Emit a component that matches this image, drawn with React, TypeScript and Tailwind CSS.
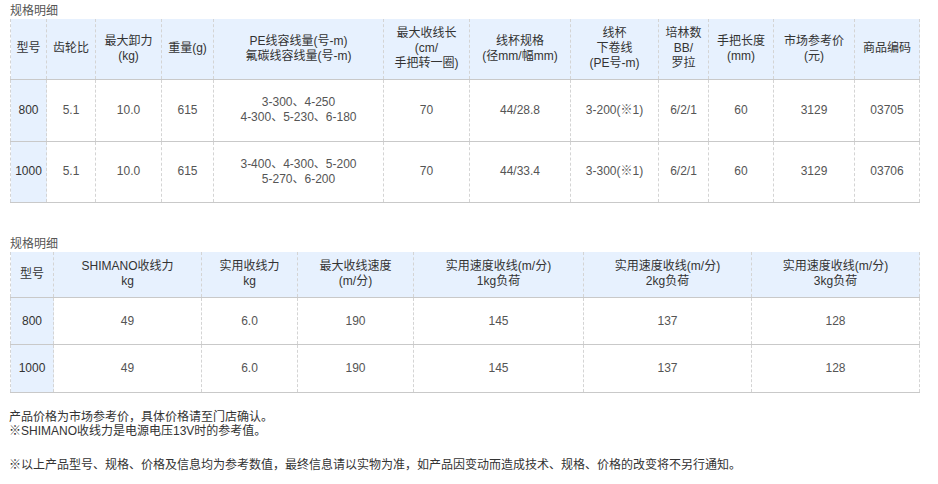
import React from "react";

const font = { fontFamily: '"Liberation Sans", "Noto Sans CJK SC", sans-serif' };

type Cell = string | string[];

function Lines({ v }: { v: Cell }) {
  if (Array.isArray(v)) {
    return (
      <>
        {v.map((l, i) => (
          <div key={i}>{l}</div>
        ))}
      </>
    );
  }
  return <>{v}</>;
}

function SpecTable({
  widths,
  head,
  rows,
  headH,
  rowH,
}: {
  widths: number[];
  head: Cell[];
  rows: Cell[][];
  headH: string;
  rowH: string[];
}) {
  return (
    <table className="table-fixed border-collapse w-[909px] ml-[10px] text-[12px] leading-[15px]">
      <colgroup>
        {widths.map((w, i) => (
          <col key={i} style={{ width: w }} />
        ))}
      </colgroup>
      <thead>
        <tr className={headH}>
          {head.map((h, i) => (
            <th
              key={i}
              className="p-0 font-normal text-center align-middle text-[#333] bg-[#e7f1fe] border-x border-dashed border-x-[#d4d4d4] border-b border-b-[#c9c9c9] [border-bottom-style:solid]"
            >
              <Lines v={h} />
            </th>
          ))}
        </tr>
      </thead>
      <tbody>
        {rows.map((r, ri) => (
          <tr key={ri} className={rowH[ri]}>
            {r.map((c, ci) => (
              <td
                key={ci}
                className={
                  "p-0 text-center align-middle border-x border-dashed border-x-[#d4d4d4] border-b border-b-[#c9c9c9] [border-bottom-style:solid] " +
                  (ci === 0 ? "bg-[#e7f1fe] text-[#333]" : "bg-white text-[#555]")
                }
              >
                <Lines v={c} />
              </td>
            ))}
          </tr>
        ))}
      </tbody>
    </table>
  );
}

export default function App() {
  return (
    <div className="w-[938px] h-[484px] bg-white overflow-hidden" style={font}>
      <div className="pt-[4px] pl-[10px] text-[12px] leading-[15px] text-[#555]">规格明细</div>
      <SpecTable
        widths={[36, 49, 66, 52, 170, 86, 101, 88, 50, 65, 81, 65]}
        headH="h-[60px]"
        rowH={["h-[62px]", "h-[61px]"]}
        head={[
          "型号",
          "齿轮比",
          ["最大卸力", "(kg)"],
          "重量(g)",
          ["PE线容线量(号-m)", "氟碳线容线量(号-m)"],
          ["最大收线长", "(cm/", "手把转一圈)"],
          ["线杯规格", "(径mm/幅mm)"],
          ["线杯", "下卷线", "(PE号-m)"],
          ["培林数", "BB/", "罗拉"],
          ["手把长度", "(mm)"],
          ["市场参考价", "(元)"],
          "商品编码",
        ]}
        rows={[
          ["800", "5.1", "10.0", "615", ["3-300、4-250", "4-300、5-230、6-180"], "70", "44/28.8", "3-200(※1)", "6/2/1", "60", "3129", "03705"],
          ["1000", "5.1", "10.0", "615", ["3-400、4-300、5-200", "5-270、6-200"], "70", "44/33.4", "3-300(※1)", "6/2/1", "60", "3129", "03706"],
        ]}
      />
      <div className="mt-[34px] pl-[10px] text-[12px] leading-[15px] text-[#555]">规格明细</div>
      <SpecTable
        widths={[43, 148, 96, 116, 170, 168, 168]}
        headH="h-[46px]"
        rowH={["h-[47px]", "h-[48px]"]}
        head={[
          "型号",
          ["SHIMANO收线力", "kg"],
          ["实用收线力", "kg"],
          ["最大收线速度", "(m/分)"],
          ["实用速度收线(m/分)", "1kg负荷"],
          ["实用速度收线(m/分)", "2kg负荷"],
          ["实用速度收线(m/分)", "3kg负荷"],
        ]}
        rows={[
          ["800", "49", "6.0", "190", "145", "137", "128"],
          ["1000", "49", "6.0", "190", "145", "137", "128"],
        ]}
      />
      <div className="mt-[17px] pl-[9px] text-[12px] leading-[14px] text-[#333]">
        <p>产品价格为市场参考价，具体价格请至门店确认。</p>
        <p>※SHIMANO收线力是电源电压13V时的参考值。</p>
        <p className="mt-[20px]">※以上产品型号、规格、价格及信息均为参考数值，最终信息请以实物为准，如产品因变动而造成技术、规格、价格的改变将不另行通知。</p>
      </div>
    </div>
  );
}
